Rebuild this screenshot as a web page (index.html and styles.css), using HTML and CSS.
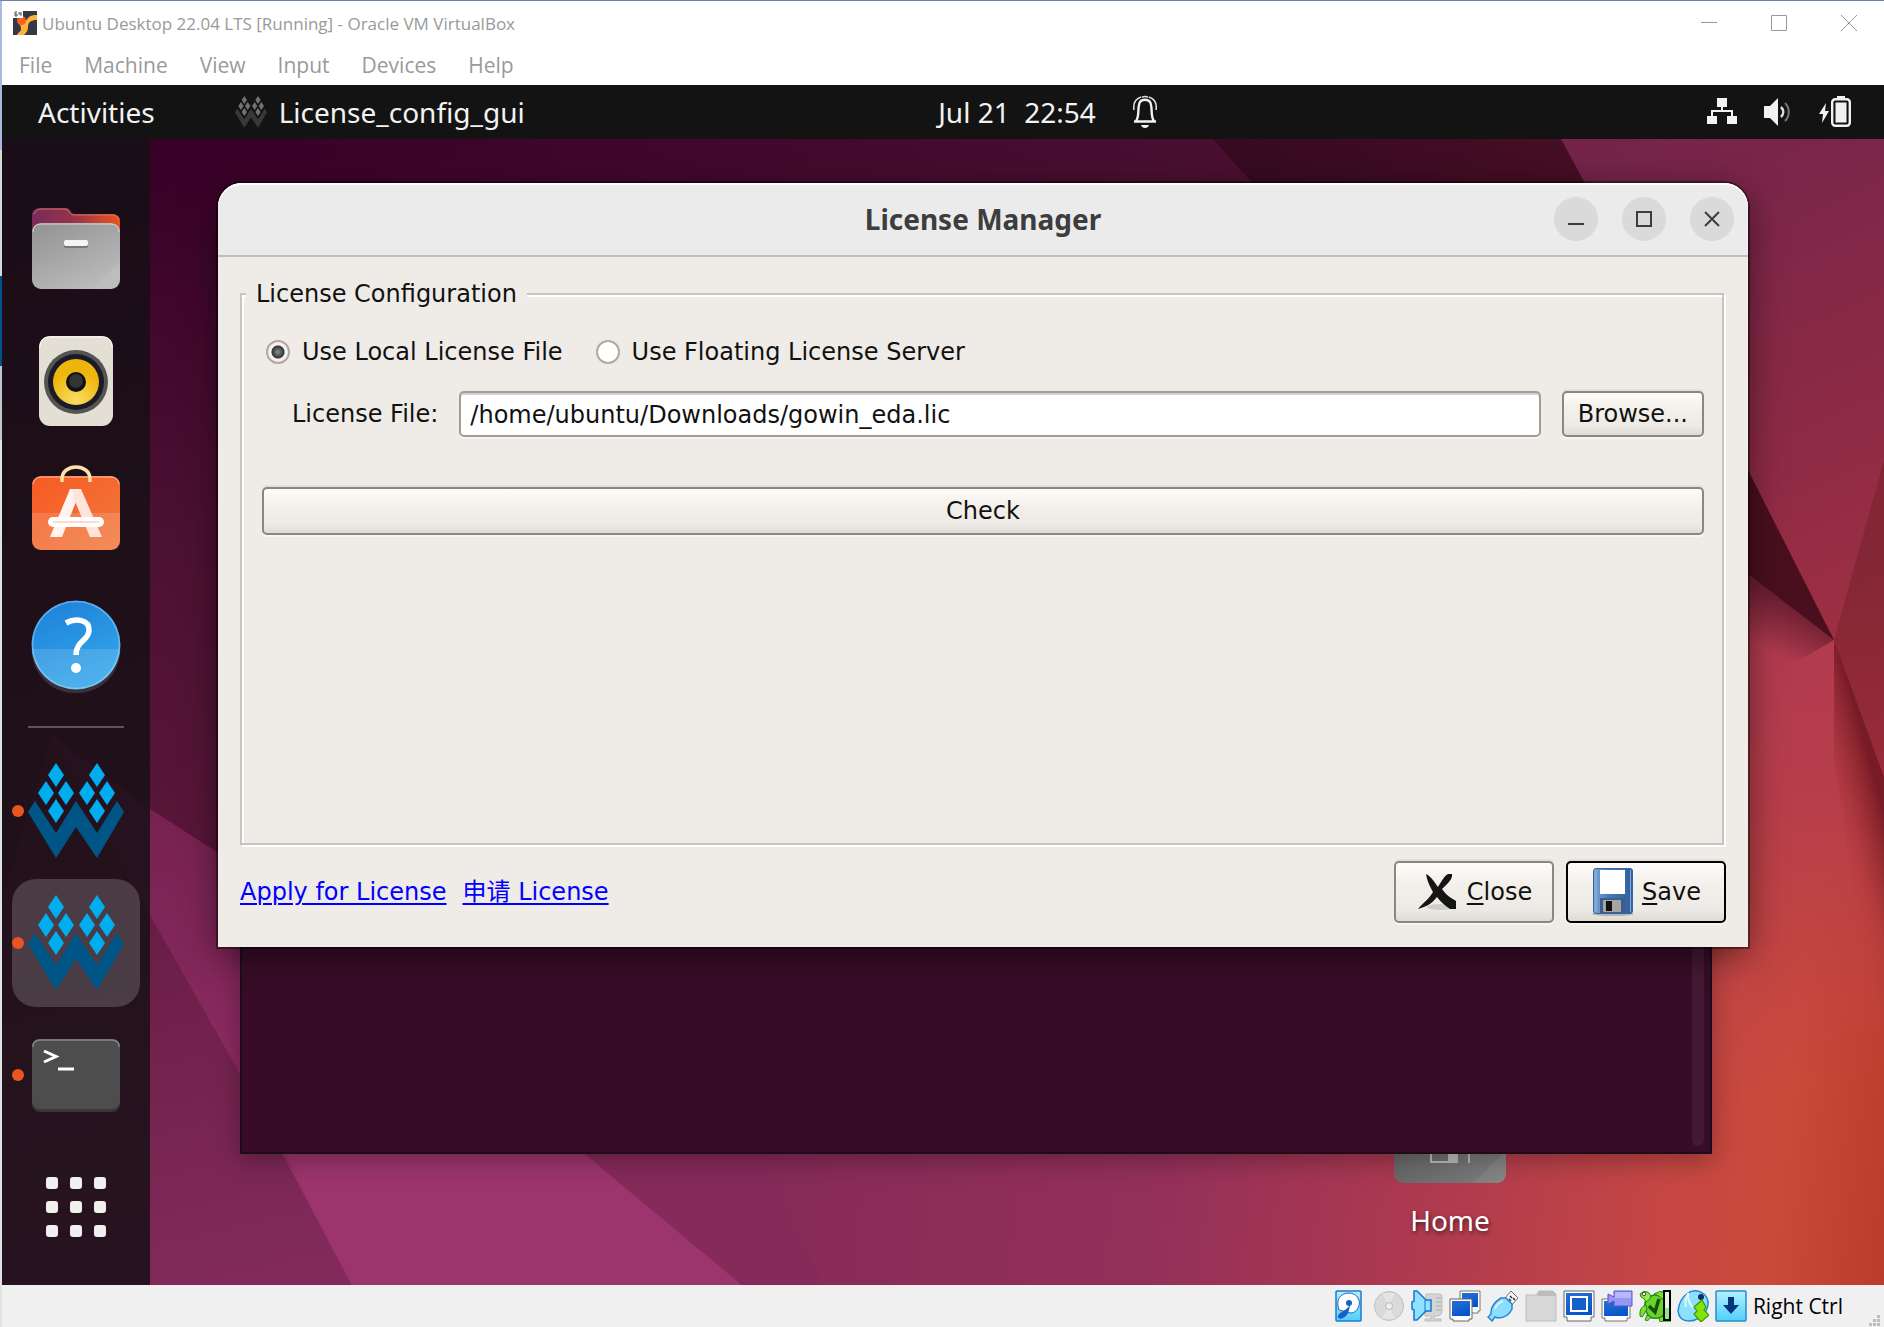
FILE: index.html
```html
<!DOCTYPE html>
<html lang="en">
<head>
<meta charset="utf-8">
<title>Ubuntu Desktop 22.04 LTS [Running] - Oracle VM VirtualBox</title>
<link rel="stylesheet" href="styles.css">
</head>
<body>
<svg class="defs" width="0" height="0" aria-hidden="true">
  <defs>
    <symbol id="gowin" viewBox="0 0 96 96">
      <path class="gw-dia" d="M28 0l8 12-8 12-8-12zM18 18l8 12-8 12-8-12zM38 18l8 12-8 12-8-12zM28 36l8 12-8 12-8-12zM69 0l8 12-8 12-8-12zM59 18l8 12-8 12-8-12zM79 18l8 12-8 12-8-12zM69 36l8 12-8 12-8-12z"/>
      <path class="gw-w" d="M0 49L7 38 28 70 48 38 69 70 89 38 96 49 69 95 48 64 28 95z"/>
    </symbol>
  </defs>
</svg>
<div class="vm">
  <header class="titlebar">
    <svg class="vm-icon" viewBox="0 0 24 24" aria-hidden="true">
      <rect width="24" height="24" fill="#343943"/>
      <path d="M24 4v5c-6 0-9 2-9 7 0 4-2 6-4 8H4c1-3 4-3 4-6 0-4-2-5-3-7h5c2 1 3-2 5-4 3-3 5-3 9-3z" fill="#ffb23e"/>
      <circle cx="8.500" cy="9.500" r="4.500" fill="#f4631e"/>
      <rect width="10" height="7" fill="#fff"/>
      <path d="M4 1H2v4h2V3H2M6 1v2h2M8 1v4" fill="none" stroke="#555"/>
    </svg>
    <span class="title">Ubuntu Desktop 22.04 LTS [Running] - Oracle VM VirtualBox</span>
    <div class="caption">
      <button aria-label="Minimize"><svg width="16" height="16" viewBox="0 0 16 16"><path d="M0 7.500h16"/></svg></button>
      <button aria-label="Maximize"><svg width="16" height="16" viewBox="0 0 16 16"><path d="M.5.500h15v15H.5z"/></svg></button>
      <button aria-label="Close window"><svg width="16" height="16" viewBox="0 0 16 16"><path d="M0 0l16 16M16 0L0 16"/></svg></button>
    </div>
  </header>
  <nav class="menubar">
    <button>File</button><button>Machine</button><button>View</button><button>Input</button><button>Devices</button><button>Help</button>
  </nav>

  <div class="panel">
    <div class="panel-left">
      <button class="activities">Activities</button>
      <button class="app-menu"><svg class="gray-app" viewBox="0 0 96 96" aria-hidden="true"><use href="#gowin"/></svg>License_config_gui</button>
    </div>
    <button class="clock"><span>Jul 21&nbsp; 22:54</span>
      <svg width="26" height="34" viewBox="0 0 26 34" aria-label="Notifications"><path d="M2 26.500h22M4 26c4-5 1-14 4-19 2-3 8-3 10 0 3 5 0 14 4 19" fill="none" stroke="#f2f2f2" stroke-width="2.400"/><path d="M9 2C3 4 1 9 2 15M17 2c6 2 8 7 7 13" fill="none" stroke="#ddd" stroke-width="1.600"/><path d="M10 2.500C11 1 15 1 16 2.500" fill="none" stroke="#ddd" stroke-width="1.500"/><path d="M9 30h8c-1 4-7 4-8 0z" fill="#f2f2f2"/></svg>
    </button>
    <button class="system" aria-label="System menu">
      <svg width="32" height="32" viewBox="0 0 32 32"><path d="M11 2h10v9H11zM1 20h10v8H1zM21 20h10v8H21z" fill="#f2f2f2"/><path d="M16 10v5M6 21v-6h20v6" fill="none" stroke="#f2f2f2" stroke-width="2"/></svg>
      <svg width="32" height="32" viewBox="0 0 32 32"><path d="M2 10h6l8-8v28l-8-8H2z" fill="#f2f2f2"/><path d="M19 11c3 3 3 7 0 10" fill="none" stroke="#ddd" stroke-width="2.500"/><path d="M23 7c5 5 5 13 0 18" fill="none" stroke="#777" stroke-width="2"/></svg>
      <svg width="34" height="32" viewBox="0 0 34 32"><path d="M8 7L1 18h4l-1 9 7-12H7z" fill="#f2f2f2"/><path d="M19 0h8v3h-8z" fill="#f2f2f2"/><rect x="14.200" y="3.200" width="17.600" height="26.600" rx="3" fill="none" stroke="#f2f2f2" stroke-width="2.400"/><rect x="17.500" y="6.500" width="11" height="20" fill="#f2f2f2"/></svg>
    </button>
  </div>

  <main class="screen">
    <svg class="wallpaper" viewBox="2 139 1882 1146" preserveAspectRatio="none" aria-hidden="true">
      <defs>
        <linearGradient id="w0" gradientUnits="userSpaceOnUse" x1="150" y1="139" x2="400" y2="900"><stop offset="0" stop-color="#380027"/><stop offset=".5" stop-color="#4d1133"/><stop offset="1" stop-color="#5e183c"/></linearGradient>
        <linearGradient id="w1" gradientUnits="userSpaceOnUse" x1="1213" y1="0" x2="1583" y2="0"><stop offset="0" stop-color="#360a22"/><stop offset="1" stop-color="#470e24"/></linearGradient>
        <linearGradient id="w2" gradientUnits="userSpaceOnUse" x1="1620" y1="139" x2="1850" y2="640"><stop offset="0" stop-color="#74244b"/><stop offset=".5" stop-color="#882946"/><stop offset="1" stop-color="#9e2f43"/></linearGradient>
        <linearGradient id="w3" gradientUnits="userSpaceOnUse" x1="740" y1="1154" x2="1884" y2="1285"><stop offset="0" stop-color="#852a59"/><stop offset=".36" stop-color="#93305a"/><stop offset=".58" stop-color="#ac3950"/><stop offset=".8" stop-color="#c54644"/><stop offset=".9" stop-color="#ca4a3a"/><stop offset="1" stop-color="#bb3c2a"/></linearGradient>
        <linearGradient id="w4" gradientUnits="userSpaceOnUse" x1="1780" y1="620" x2="1800" y2="1100"><stop offset="0" stop-color="#b03a50"/><stop offset=".4" stop-color="#b83e4a"/><stop offset="1" stop-color="#c04346" stop-opacity="0"/></linearGradient>
        <linearGradient id="w5" gradientUnits="userSpaceOnUse" x1="150" y1="810" x2="240" y2="1285"><stop offset="0" stop-color="#762250"/><stop offset=".5" stop-color="#8a2a60"/><stop offset="1" stop-color="#a0386f"/></linearGradient>
        <linearGradient id="w6" gradientUnits="userSpaceOnUse" x1="150" y1="900" x2="240" y2="1285"><stop offset="0" stop-color="#681d45"/><stop offset="1" stop-color="#822b5b"/></linearGradient>
        <linearGradient id="w7" gradientUnits="userSpaceOnUse" x1="1834" y1="560" x2="1884" y2="777"><stop offset="0" stop-color="#832635"/><stop offset="1" stop-color="#992c38"/></linearGradient>
        <linearGradient id="w8" gradientUnits="userSpaceOnUse" x1="1790" y1="604" x2="1766" y2="650"><stop offset="0" stop-color="#6d1f31"/><stop offset="1" stop-color="#6d1f31" stop-opacity="0"/></linearGradient>
        <linearGradient id="w9" gradientUnits="userSpaceOnUse" x1="1870" y1="760" x2="1815" y2="775"><stop offset="0" stop-color="#771b26"/><stop offset=".35" stop-color="#8a2529" stop-opacity=".6"/><stop offset=".7" stop-color="#9c2d2b" stop-opacity=".15"/><stop offset="1" stop-color="#a03028" stop-opacity="0"/></linearGradient>
      </defs>
      <path d="M2 139h1882v1146H2z" fill="url(#w0)"/>
      <path d="M1213 139h350l300 600H1748z" fill="url(#w1)"/>
      <path d="M1561 139h323v501h-50z" fill="url(#w2)"/>
      <path d="M585 1100h1015l100-565 134 105 50 150v495H585z" fill="url(#w3)"/>
      <path d="M1700 535l134 105 50 150v495h-184z" fill="url(#w4)"/>
      <path d="M1834 640l50 130v330l-50-340z" fill="url(#w9)"/>
      <path d="M1884 460v317l-50-137z" fill="url(#w7)"/>
      <path d="M1700 535l134 105-86 50-48-10z" fill="url(#w8)"/>
      <path d="M1748 470l86 170-86-66z" fill="#4a0f1e"/>
      <path d="M52 735l98 74 450 290v186H2z" fill="url(#w5)"/>
      <path d="M520 1100l222 185H352L240 1060z" fill="#9c356d"/>
      <path d="M585 1154l157 131h80l-80-180H526z" fill="#852a59"/>
      <path d="M52 735l98 180 90 159 112 211H2V900z" fill="url(#w6)"/>
    </svg>

    <nav class="dock" aria-label="Dock">
      <button class="dock-item" aria-label="Files">
        <svg viewBox="0 0 96 96"><defs><linearGradient id="f1"><stop offset="0" stop-color="#7b2a5a"/><stop offset=".45" stop-color="#93334a"/><stop offset="1" stop-color="#e9541f"/></linearGradient><linearGradient id="f2" x1="0" y1="0" x2=".6" y2="1"><stop offset="0" stop-color="#929292"/><stop offset="1" stop-color="#b9b9b9"/></linearGradient></defs>
        <path d="M4 40V15q0-8 8-8h26q3 0 5 4 1 2 4 2h37q8 0 8 8v20z" fill="url(#f1)"/><path d="M6 13q2-5 7-5h24q3 0 5 4 1 2 4 2h38q6 0 7 5" fill="none" stroke="#d98a78" stroke-opacity=".7"/>
        <rect x="4" y="22" width="88" height="66" rx="9" fill="url(#f2)"/><path d="M5 31q0-8 8-8h70q8 0 8 8" fill="none" stroke="#d5d5d5"/><path d="M92 60v19q0 9-9 9H66z" fill="#fff" opacity=".07"/><rect x="36" y="40" width="24" height="7" rx="2" fill="#777"/><rect x="36" y="39" width="24" height="6" rx="2" fill="#f4f4f4"/></svg>
      </button>
      <button class="dock-item" aria-label="Rhythmbox">
        <svg viewBox="0 0 96 96"><defs><radialGradient id="r1" cx=".5" cy=".9" r=".9"><stop offset="0" stop-color="#fbdc64"/><stop offset=".7" stop-color="#eeb60c"/></radialGradient></defs><rect x="11" y="3" width="74" height="90" rx="11" fill="#e3dfd5"/><path d="M12 14q0-10 10-10h52q10 0 10 10" fill="none" stroke="#fff"/><circle cx="48" cy="49" r="32" fill="#555452"/><circle cx="48" cy="49" r="28" fill="#1b1a28"/><circle cx="48" cy="49" r="23" fill="url(#r1)"/><circle cx="48" cy="49" r="10" fill="#111"/><circle cx="48" cy="48" r="7" fill="#333"/></svg>
      </button>
      <button class="dock-item" aria-label="Ubuntu Software">
        <svg viewBox="0 0 96 96"><defs><linearGradient id="s1" x1="0" y1="0" x2="1" y2="1"><stop offset="0" stop-color="#f75a22"/><stop offset="1" stop-color="#f07a3e"/></linearGradient></defs><rect x="4" y="11" width="88" height="74" rx="9" fill="url(#s1)"/><path d="M4 48h88v28q0 9-9 9H13q-9 0-9-9z" fill="#fff" opacity=".14"/><path d="M5 19q1-7 8-7h70q7 0 8 7" fill="none" stroke="#ffc29f"/><path d="M34 17v-3c0-16 28-16 28 0v3" fill="none" stroke="#ffe0a8" stroke-width="3.500"/><path d="M42 24h11L34 72H22z" fill="#fff4ee"/><path d="M44 24h9l21 48H62L46 34z" fill="#ffe4da"/><rect x="20" y="52" width="56" height="10" rx="5" fill="#fff"/><path d="M25 57h46" stroke="#ffd9cb" stroke-width="2"/></svg>
      </button>
      <button class="dock-item" aria-label="Help">
        <svg viewBox="0 0 96 96"><defs><linearGradient id="h1" x1="0" y1="0" x2=".4" y2="1"><stop offset="0" stop-color="#1c7fd9"/><stop offset="1" stop-color="#33a5e9"/></linearGradient></defs><circle cx="48" cy="48" r="44.500" fill="url(#h1)"/><path d="M3.500 52h89a44.500 44.500 0 0 1-89 0z" fill="#fff" opacity=".13"/><circle cx="48" cy="48" r="43.500" fill="none" stroke="#fff" stroke-opacity=".3" stroke-width="1.500"/><path d="M38 26c9-5 24-4 23 8-1 10-13 10-13 24" fill="none" stroke="#fff" stroke-width="5.500"/><circle cx="48" cy="71" r="5" fill="#fff"/></svg>
      </button>
      <hr class="dock-sep">
      <button class="dock-item running" aria-label="Gowin EDA"><svg viewBox="0 0 96 96"><use href="#gowin"/></svg></button>
      <button class="dock-item running active" aria-label="License config"><svg viewBox="0 0 96 96"><use href="#gowin"/></svg></button>
      <button class="dock-item running" aria-label="Terminal">
        <svg viewBox="0 0 96 96"><rect x="4" y="12" width="88" height="73" rx="8" fill="#3a3636"/><rect x="4" y="12" width="88" height="70" rx="8" fill="#4d4d4d"/><path d="M5 20q0-7 7-7h72q7 0 7 7" fill="none" stroke="#868686" stroke-width="1.500"/><path d="M16 24l12 5.500-12 5.500" fill="none" stroke="#fff" stroke-width="3"/><path d="M30 42h16" stroke="#fff" stroke-width="3"/></svg>
      </button>
      <button class="dock-item" aria-label="Show Applications">
        <svg viewBox="0 0 96 96" fill="#f0f0ee"><rect x="18" y="18" width="12" height="12" rx="3"/><rect x="42" y="18" width="12" height="12" rx="3"/><rect x="66" y="18" width="12" height="12" rx="3"/><rect x="18" y="42" width="12" height="12" rx="3"/><rect x="42" y="42" width="12" height="12" rx="3"/><rect x="66" y="42" width="12" height="12" rx="3"/><rect x="18" y="66" width="12" height="12" rx="3"/><rect x="42" y="66" width="12" height="12" rx="3"/><rect x="66" y="66" width="12" height="12" rx="3"/></svg>
      </button>
    </nav>

    <div class="desktop">
      <a class="home" href="#home">
        <svg width="112" height="90" viewBox="0 0 112 90" aria-hidden="true"><defs><linearGradient id="hm" x1="0" x2="1"><stop offset="0" stop-color="#686868"/><stop offset="1" stop-color="#7e7e7e"/></linearGradient></defs><rect width="112" height="90" rx="9" fill="url(#hm)"/><path d="M112 57v24q0 9-9 9H80z" fill="#fff" opacity=".07"/><path d="M37 50v19h26V50M75 50v20" fill="none" stroke="#bdbdbd" stroke-width="2"/><path d="M54 50h10v20H54z" fill="#bdbdbd"/></svg>
        <span>Home</span>
      </a>
      <div class="terminal"><div class="term-scroll"></div></div>

      <section class="dialog" role="dialog" aria-labelledby="dlg-title">
        <header class="dialog-head">
          <h1 id="dlg-title">License Manager</h1>
          <div class="dialog-controls">
            <button aria-label="Minimize dialog"><svg width="20" height="20" viewBox="0 0 20 20"><path d="M2 15h16"/></svg></button>
            <button aria-label="Maximize dialog"><svg width="20" height="20" viewBox="0 0 20 20"><path d="M3 3h14v14H3z"/></svg></button>
            <button aria-label="Close dialog"><svg width="20" height="20" viewBox="0 0 20 20"><path d="M3 3l14 14M17 3L3 17"/></svg></button>
          </div>
        </header>
        <form class="dialog-body">
          <fieldset>
            <legend>License Configuration</legend>
            <div class="modes">
              <label><input type="radio" name="mode" checked>Use Local License File</label>
              <label><input type="radio" name="mode">Use Floating License Server</label>
            </div>
            <div class="file-row">
              <label for="licfile">License File:</label>
              <input type="text" id="licfile" value="/home/ubuntu/Downloads/gowin_eda.lic">
              <button type="button" class="btn">Browse...</button>
            </div>
            <button type="button" class="btn check">Check</button>
          </fieldset>
          <div class="actions">
            <a href="#apply">Apply for License</a>
            <a href="#apply-zh">申请 License</a>
            <button type="button" class="btn big push"><svg width="44" height="48" viewBox="0 0 44 48" aria-hidden="true"><ellipse cx="25" cy="39" rx="14" ry="3" fill="#000" opacity=".12"/><path d="M10 6c6 3 9 9 12 13 3-5 7-12 10-13h4c1 5-5 10-10 15 4 6 9 9 14 12v8h-6c-6-4-10-8-13-12-4 5-8 9-19 12 4-5 11-10 15-17-3-5-6-11-7-18z" fill="#151515"/></svg><span><u>C</u>lose</span></button>
            <button type="button" class="btn big default"><svg width="44" height="48" viewBox="0 0 44 48" aria-hidden="true"><defs><linearGradient id="sv"><stop offset="0" stop-color="#7ea5d4"/><stop offset=".4" stop-color="#4478b8"/><stop offset="1" stop-color="#2f5f9f"/></linearGradient></defs><ellipse cx="22" cy="46" rx="21" ry="2" fill="#000" opacity=".2"/><rect x="2.500" y=".5" width="39" height="45" rx="2.500" fill="url(#sv)" stroke="#3465a4"/><path d="M5 2v42M39.500 2v42" stroke="#9dbde2" opacity=".8"/><rect x="9" y="2" width="25" height="24" fill="#fff"/><rect x="9" y="30" width="26" height="15" fill="#3b5f93"/><rect x="12" y="32" width="18" height="12" rx="1" fill="#a5a69e"/><rect x="15" y="33" width="6" height="10" fill="#111"/></svg><span><u>S</u>ave</span></button>
          </div>
        </form>
      </section>
    </div>
  </main>

  <footer class="status">
    <svg viewBox="0 0 32 32"><defs><linearGradient id="cy" x2="0" y2="1"><stop offset="0" stop-color="#b4f0ff"/><stop offset="1" stop-color="#4fd0fb"/></linearGradient><linearGradient id="bl" x2=".4" y2="1"><stop offset="0" stop-color="#2b6fd2"/><stop offset="1" stop-color="#0458cc"/></linearGradient></defs><rect x="1" y="1" width="25" height="30" rx="1" fill="url(#cy)" stroke="#1b7cd0" stroke-width="1.500"/><path d="M4 20C0 9 6 3 14 3s13 8 9 15c-2 4-5 5-8 5z" fill="#fff" stroke="#1d62c0"/><circle cx="14" cy="13" r="3" fill="#1561c9"/><path d="M3 27c0-5 7-5 12-12-1 6-2 11-7 13-2 1-5 1-5-1z" fill="#1561c9"/></svg>
    <svg viewBox="0 0 32 32"><circle cx="16" cy="16" r="14.500" fill="#dadada" stroke="#bfbfbf"/><path d="M16 16L9 3h13zM16 16l-7 13h13z" fill="#ececec" opacity=".6"/><circle cx="16" cy="16" r="3.500" fill="#eee" stroke="#b8b8b8"/></svg>
    <svg viewBox="0 0 32 32"><path d="M15 4h14q2 0 2 3v14q0 5-6 5h-2v3h7v2H14v-2h6v-3h-6z" fill="#d5d5d5" stroke="#bcbcbc"/><path d="M25 8h5M25 12h5M25 16h5M25 20h5" stroke="#aaa"/><path d="M3 1h3l9 9h5v11h-5l-9 9H3V20l-2-1v-7l2-1z" fill="#8de2ff" stroke="#1c72d0" stroke-width="1.500"/><path d="M14 10v12" stroke="#1c72d0"/></svg>
    <svg viewBox="0 0 32 32"><path d="M11 1h20v20h-2v2H11z" fill="#fff" stroke="#777"/><rect x="13" y="3" width="16" height="14" fill="url(#bl)"/><path d="M1 9h22v20h-3v2H4v-2H1z" fill="#fff" stroke="#666"/><rect x="3" y="11" width="18" height="15" fill="url(#bl)"/></svg>
    <svg viewBox="0 0 32 32"><path d="M18 8l6-7 7 7-6 7z" fill="#f4f4f4" stroke="#777"/><path d="M23 6l2 2M22 9l2 2M26 8l2 2" stroke="#333" stroke-width="1.500"/><path d="M14 8h5l6 6v5q-4 9-14 9l-3-1-3 4-4-4 3-3q-1-9 10-16z" fill="#8addff" stroke="#2a84d4" stroke-width="1.500"/><path d="M8 19q2-6 8-8" fill="none" stroke="#d5f4ff" stroke-width="2"/></svg>
    <svg viewBox="0 0 32 32"><path d="M1 5h10l3-4h14l3 3v27H1z" fill="#d7d7d7" stroke="#bdbdbd"/><path d="M12 6l2-5h14l3 3v2z" fill="#bcbcbc"/></svg>
    <svg viewBox="0 0 32 32"><path d="M1 1h30v26h-3v4H4v-4H1z" fill="#fff" stroke="#666"/><path d="M3 3h26v22H3z" fill="url(#bl)"/><path d="M8 7h16v14H8z" fill="#155fca" stroke="#fff" stroke-width="2"/></svg>
    <svg viewBox="0 0 32 32"><path d="M1 9h28v19h-3v3H4v-3H1z" fill="#fff" stroke="#777"/><path d="M3 11h24v15H3z" fill="url(#bl)"/><path d="M13 1h18v15H13v-5l-6 3V4l6 3z" fill="#9897f5" stroke="#5856c8"/><path d="M14 2h16v6H14z" fill="#c5c6ff" opacity=".7"/></svg>
    <svg viewBox="0 0 32 32"><path d="M8 9q8-8 17 0v14q-2 5-6 5-9 2-12-7-3-7 1-12z" fill="#69d32d" stroke="#268a0e" stroke-width="1.500"/><path d="M7 15q-7 2-6 11 1 2 3 0l4-7zM8 25l-2 5q3 2 6-3zM20 28l1 4 4-1v-5z" fill="#7ade37" stroke="#268a0e"/><path d="M1 4q3-4 8-2 4 3 2 7l-4 3q-1-4-5-5z" fill="#93ef4c" stroke="#268a0e"/><path d="M15 4q6-4 11-2v7h-3q-3-4-8-5z" fill="#7ade37" stroke="#268a0e"/><circle cx="5" cy="4" r="1.800" fill="#fff" stroke="#222" stroke-width=".8"/><path d="M10 16l6 6 4-13" fill="none" stroke="#14520c" stroke-width="3.500"/><path d="M25 1h6v29h-6z" fill="#e9f6df" stroke="#000" stroke-width="2"/><path d="M26 18h4v11h-4z" fill="#9be08a"/><path d="M25 31h7v1h-7z" fill="#2be320"/></svg>
    <svg viewBox="0 0 32 32"><path d="M1 21Q2 9 11 3q8-5 16 1 7 7 2 17-7 10-17 10Q2 31 1 21z" fill="#8de0fd" stroke="#2489d2" stroke-width="1.500"/><path d="M11 3q-1 8 5 15M9 17q-2-9 3-14" fill="none" stroke="#e2faff" stroke-width="2"/><circle cx="24" cy="7" r="3" fill="#0b2d63"/><path d="M17 17l8-7 4 7-2 3 5 5-8 7-7-8 3-3z" fill="#83e40d" stroke="#3b9a05" stroke-width="1.200"/></svg>
    <svg viewBox="0 0 32 32"><rect x="1" y="1" width="30" height="30" rx="1" fill="url(#cy)" stroke="#2a8ccc" stroke-width="1.500"/><path d="M13 7h6v8h5l-8 9-8-9h5z" fill="#06357a"/></svg>
    <span class="hostkey">Right Ctrl</span>
    <svg class="grip" viewBox="0 0 12 12" aria-hidden="true"><path d="M8 0h3v3H8zM4 4h3v3H4zM8 4h3v3H8zM0 8h3v3H0zM4 8h3v3H4zM8 8h3v3H8z" fill="#bdbdbd"/></svg>
  </footer>
</div>
</body>
</html>
```
FILE: styles.css
```css
* { box-sizing: border-box; }

body {
  margin: 0;
  background: #fff;
  font-family: "Noto Sans", sans-serif;
}

button {
  margin: 0;
  padding: 0;
  border: 0;
  background: none;
  font: inherit;
  color: inherit;
}

svg { display: block; flex: none; }
.defs { position: absolute; }

.vm {
  min-height: 100vh;
  display: flex;
  flex-direction: column;
  border-top: 1px solid #6b83a8;
  border-left: 2px solid #c3cbd6;
  border-image: linear-gradient(#6b83a8 0 1px, #a9bbdc 1px 150px, #d5d9d8 150px 276px, #00508a 276px 366px, #c3c7c6 366px 440px, #dfe3e2 440px) 1 0 0 2;
}

/* Host window chrome */
.titlebar {
  display: flex;
  align-items: center;
  height: 44px;
  padding: 0 27px 0 11px;
  font-family: "Open Sans", sans-serif;
  font-size: 17px;
  color: #999;
}
.vm-icon { width: 24px; height: 24px; }
.title { margin-left: 5px; }
.caption { margin-left: auto; display: flex; gap: 54px; }
.caption svg { fill: none; stroke: #999; }

.menubar {
  display: flex;
  align-items: center;
  gap: 32px;
  height: 40px;
  padding: 0 17px;
  font-family: "Open Sans", sans-serif;
  font-size: 21px;
  color: #9a9a9a;
}

/* Guest top panel */
.panel {
  display: grid;
  grid-template-columns: minmax(0, 1fr) auto minmax(0, 1fr);
  align-items: center;
  height: 54px;
  background: #131313;
  color: #f2f2f2;
  font-size: 28px;
  line-height: 32px;
}
.panel-left { display: flex; gap: 80px; padding-left: 36px; }
.app-menu { display: flex; align-items: center; gap: 12px; }
.gray-app { width: 32px; height: 32px; filter: grayscale(1) brightness(0.8); }
.clock { display: flex; align-items: center; gap: 36px; margin-left: 210px; white-space: nowrap; }
.system { display: flex; align-items: center; justify-content: flex-end; gap: 24px; padding-right: 32px; }
.gw-dia { fill: #00adef; }
.gw-w { fill: #005587; }

/* Guest screen */
.screen { position: relative; flex: 1; display: flex; }
.wallpaper { position: absolute; inset: 0; width: 100%; height: 100%; }

.dock {
  position: relative;
  display: flex;
  flex-direction: column;
  align-items: center;
  gap: 4px;
  width: 148px;
  padding: 46px 0 12px;
  background: rgba(22, 16, 20, 0.84);
}
.dock-item {
  position: relative;
  display: grid;
  place-items: center;
  width: 128px;
  height: 128px;
  border-radius: 24px;
}
.dock-item svg { width: 96px; height: 96px; }
.active { background: rgba(255, 255, 255, 0.18); }
.running::before {
  content: "";
  position: absolute;
  left: 0;
  top: 58px;
  width: 12px;
  height: 12px;
  border-radius: 6px;
  background: #e95420;
}
.dock-sep { width: 96px; height: 2px; margin: 13px 0 15px; border: 0; background: #5d5359; }

.desktop { position: relative; flex: 1; }

.home {
  position: absolute;
  right: 344px;
  bottom: 48px;
  width: 180px;
  display: flex;
  flex-direction: column;
  align-items: center;
  gap: 20px;
  color: #fff;
  font-size: 28px;
  line-height: 34px;
  text-decoration: none;
  text-shadow: 1px 2px 4px rgba(0, 0, 0, 0.6);
}

.terminal {
  position: absolute;
  top: 400px;
  right: 172px;
  bottom: 131px;
  left: 90px;
  display: flex;
  justify-content: flex-end;
  padding: 0 6px 6px;
  background: #380c28;
  border: 2px solid #1e0d18;
  box-shadow: 0 6px 24px rgba(0, 0, 0, 0.3);
}
.term-scroll { width: 12px; border-radius: 6px; background: #431a35; }

/* License Manager dialog */
.dialog {
  position: absolute;
  top: 44px;
  right: 136px;
  left: 68px;
  border-radius: 24px 24px 0 0;
  background: #efebe7;
  box-shadow: 0 0 0 2px rgba(0, 0, 0, 0.4), 0 8px 36px rgba(0, 0, 0, 0.5);
  color: #111;
  font-family: "DejaVu Sans", "Noto Sans CJK SC", sans-serif;
  font-size: 24px;
  line-height: 30px;
}
.dialog-head {
  display: grid;
  grid-template-columns: 1fr auto 1fr;
  align-items: center;
  height: 74px;
  padding: 0 14px;
  border-bottom: 2px solid #bfbfbd;
  border-radius: 24px 24px 0 0;
  background: #ebebeb;
  box-shadow: inset 0 2px 0 #fff;
}
.dialog-head h1 {
  grid-column: 2;
  margin: 0;
  font-family: "Noto Sans", sans-serif;
  font-size: 28px;
  font-weight: 700;
  color: #3d3d3d;
}
.dialog-controls { display: flex; justify-content: flex-end; gap: 24px; }
.dialog-controls button {
  display: grid;
  place-items: center;
  width: 44px;
  height: 44px;
  border-radius: 22px;
  background: #dadada;
}
.dialog-controls svg { fill: none; stroke: #3d3d3d; stroke-width: 2px; }

.dialog-body { padding: 22px 22px 24px; }
fieldset {
  min-width: 0;
  min-height: 566px;
  margin: 0 2px 16px 0;
  padding: 28px 18px 20px 20px;
  border: 2px solid #c8c5c1;
  box-shadow: inset 2px 2px 0 #fff, 2px 2px 0 #fff;
}
legend { margin-left: -16px; padding: 0 10px; background: #efebe7; }

.modes { display: flex; gap: 33px; height: 30px; padding-left: 4px; }
.modes label { display: flex; align-items: center; gap: 12px; }
.modes input {
  appearance: none;
  width: 24px;
  height: 24px;
  margin: 0;
  border: 2px solid #b3a79e;
  border-radius: 50%;
  background: #fff;
}
.modes input:checked {
  background: radial-gradient(circle at 10px 10px, #7b8488 0 1px, #2e3436 6px, transparent 7px), #f4f2f0;
}

.file-row { display: flex; align-items: center; gap: 21px; margin-top: 24px; padding-left: 30px; }
.file-row input {
  flex: 1;
  min-width: 0;
  height: 46px;
  padding: 2px 9px 0;
  border: 2px solid #a59d95;
  border-radius: 5px;
  background: #fff;
  box-shadow: inset 0 2px 0 #d4d2d0, 0 2px 0 #f7f5f3;
  font: inherit;
  color: #111;
}

.btn {
  height: 46px;
  padding: 0 14px;
  border: 2px solid #8d857e;
  border-radius: 5px;
  background: linear-gradient(#fefbf9, #f3f0eb 40%, #edeae5 80%, #dfdad4);
  box-shadow: 0 -2px 0 #e3dfdb, 0 2px 0 #f7f5f3;
  color: #111;
}
.check { display: block; width: 100%; height: 48px; margin-top: 50px; }

.actions { display: flex; align-items: center; }
.actions a { margin-right: 16px; color: #00f; text-decoration-thickness: 2px; text-underline-offset: 3px; }
.big { display: flex; align-items: center; justify-content: center; gap: 7px; width: 160px; height: 62px; padding: 0; }
.big u { text-decoration-thickness: 2px; text-underline-offset: 3px; }
.push { margin-left: auto; margin-right: 12px; }
.default { border-color: #000; }

/* Host status bar */
.status {
  display: flex;
  align-items: center;
  justify-content: flex-end;
  gap: 6px;
  height: 42px;
  padding-right: 3px;
  background: #f0f0f0;
  font-family: "Open Sans", sans-serif;
  font-size: 21px;
  color: #000;
}
.status svg { width: 32px; height: 32px; }
.hostkey { margin-right: 20px; white-space: nowrap; }
.status .grip { width: 12px; height: 12px; align-self: flex-end; }
```
